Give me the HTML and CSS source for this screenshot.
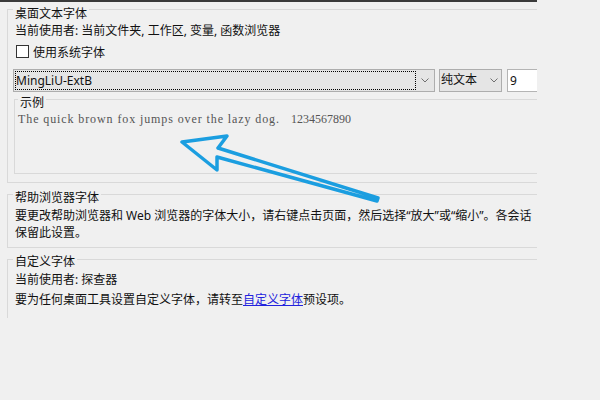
FILE: index.html
```html
<!DOCTYPE html>
<html lang="zh-CN">
<head>
<meta charset="utf-8">
<title>字体</title>
<link rel="stylesheet" href="styles.css">
</head>
<body>
<div class="page">
  <div class="panel">
    <div class="group g1">
      <div class="legend">桌面文本字体</div>
      <div class="line users">当前使用者: 当前文件夹, 工作区, 变量, 函数浏览器</div>
      <label class="check-row"><span class="checkbox"></span><span>使用系统字体</span></label>
      <div class="combo-row">
        <div class="combo combo-font">
          <span class="combo-value focus">MingLiU-ExtB</span>
          <svg class="chev" width="8" height="5" viewBox="0 0 8 5"><polyline points="0.5,0.5 4,4 7.5,0.5" fill="none" stroke="#707070" stroke-width="1"/></svg>
        </div>
        <div class="combo combo-style">
          <span class="combo-value">纯文本</span>
          <svg class="chev" width="8" height="5" viewBox="0 0 8 5"><polyline points="0.5,0.5 4,4 7.5,0.5" fill="none" stroke="#707070" stroke-width="1"/></svg>
        </div>
        <div class="edit">9</div>
      </div>
      <div class="group sample">
        <div class="legend">示例</div>
        <div class="sample-text">The quick brown fox jumps over the lazy dog.<span class="digits">1234567890</span></div>
      </div>
    </div>

    <div class="group g2">
      <div class="legend">帮助浏览器字体</div>
      <div class="line l1">要更改帮助浏览器和 Web 浏览器的字体大小，请右键点击页面，然后选择“放大”或“缩小”。各会话</div>
      <div class="line l2">保留此设置。</div>
    </div>

    <div class="group g3">
      <div class="legend">自定义字体</div>
      <div class="line users3">当前使用者: 探查器</div>
      <div class="line last">要为任何桌面工具设置自定义字体，请转至<a class="link" href="#">自定义字体</a>预设项。</div>
    </div>
  </div>
  <svg class="arrow" width="600" height="400" viewBox="0 0 600 400">
    <polygon points="182,142 227,136 218,148 378,198 377,201 217,157 217,170" fill="none" stroke="#1b9ee0" stroke-width="3.5" stroke-linejoin="round"/>
  </svg>
</div>
</body>
</html>
```

FILE: styles.css
```css
* { box-sizing: border-box; }

body {
  margin: 0;
  background: #f0f0f0;
  font-family: "Noto Sans", "Noto Sans CJK SC", sans-serif;
  font-size: 12px;
  line-height: 18px;
  color: #111;
}

.page {
  position: relative;
  width: 600px;
  height: 400px;
  overflow: hidden;
}

.panel {
  width: 537px;
  height: 330px;
  overflow: hidden;
  border-top: 2px solid #3a3a3a;
  padding-top: 7px;
  padding-left: 7px;
}

.group {
  border: 1px solid #d9d9d9;
  width: 560px;
}

.legend {
  width: fit-content;
  margin: -6px 0 0 5px;
  padding: 0 2px;
  background: #f0f0f0;
  white-space: nowrap;
}

.line {
  padding-left: 7px;
  white-space: nowrap;
}

.g1 { height: 174px; }
.g1 > .legend { margin-top: -5px; }

.users { margin-top: -1px; }

.check-row {
  display: flex;
  align-items: flex-start;
  gap: 4px;
  height: 18px;
  margin-top: 4px;
  padding-left: 8px;
}

.checkbox {
  width: 13px;
  height: 13px;
  margin-top: 1px;
  border: 1px solid #333;
  background: #fff;
}

.combo-row {
  display: flex;
  height: 23px;
  margin-top: 7px;
  padding-left: 5px;
}

.combo {
  display: flex;
  align-items: center;
  height: 23px;
  background: #e5e5e5;
  border: 1px solid #adadad;
}

.combo-font { width: 422px; }
.combo-style { width: 63px; margin-left: 4px; padding-left: 1px; }

.combo-value {
  height: 19px;
  line-height: 18px;
  white-space: nowrap;
}

.focus {
  width: 401px;
  margin-left: 1px;
  border: 1px dotted #000;
}

.chev { margin-left: auto; }
.combo-font .chev { margin-right: 5px; }
.combo-style .chev { margin-right: 3px; }

.edit {
  width: 40px;
  height: 23px;
  margin-left: 5px;
  padding-left: 2px;
  background: #fff;
  border: 1px solid #b4b4b4;
  line-height: 21px;
}

.sample {
  width: 540px;
  height: 75px;
  margin-top: 7px;
  margin-left: 6px;
}

.sample .legend { margin-left: 3px; }

.sample-text {
  margin-top: -1px;
  padding-left: 3px;
  font-family: "Liberation Serif", serif;
  font-size: 12px;
  letter-spacing: 0.9px;
  line-height: 16px;
  color: #555;
  white-space: nowrap;
}

.digits {
  margin-left: 11px;
  letter-spacing: 0;
}

.g2 {
  height: 54px;
  margin-top: 11px;
}

.g2 .l1 { margin-top: 0; }
.g2 .l2 { margin-top: -1px; }

.g3 {
  height: 59px;
  margin-top: 11px;
  border-bottom: none;
}

.g3 > .legend { margin-top: -7px; }
.users3 { margin-top: 0; }
.last { margin-top: 2px; }

.link {
  color: #2222dd;
  text-decoration: underline;
}

.arrow {
  position: absolute;
  left: 0;
  top: 0;
  pointer-events: none;
}
```
